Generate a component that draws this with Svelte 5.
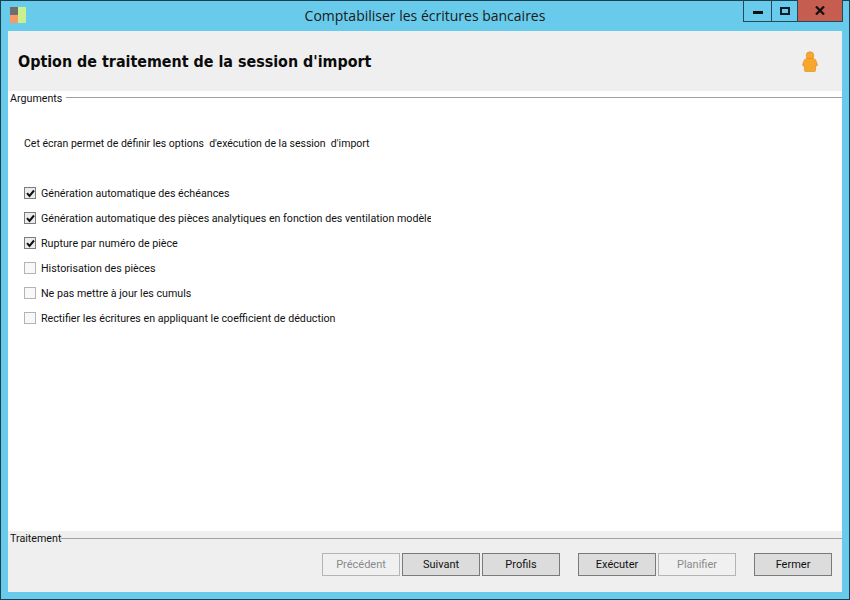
<script>
  const options = [
    { label: 'Génération automatique des échéances', checked: true },
    { label: 'Génération automatique des pièces analytiques en fonction des ventilation modèles', checked: true },
    { label: 'Rupture par numéro de pièce', checked: true },
    { label: 'Historisation des pièces', checked: false },
    { label: 'Ne pas mettre à jour les cumuls', checked: false },
    { label: 'Rectifier les écritures en appliquant le coefficient de déduction', checked: false }
  ];
</script>

<div class="window">
  <div class="titlebar">
    <svg class="appicon" width="16" height="16" viewBox="0 0 16 16">
      <rect x="0" y="0" width="8" height="8" fill="#6e6e6e" />
      <rect x="0" y="8" width="8" height="8" fill="#f79a68" />
      <rect x="8" y="0" width="8" height="16" fill="#c8f08c" />
    </svg>
    <div class="title">Comptabiliser les écritures bancaires</div>
    <div class="controls">
      <div class="ctl min"><span></span></div>
      <div class="ctl max"><span></span></div>
      <div class="ctl close">
        <svg width="10" height="9" viewBox="0 0 10 9"><path d="M1 0.5 L9 8.5 M9 0.5 L1 8.5" stroke="#111" stroke-width="2.2" fill="none" /></svg>
      </div>
    </div>
  </div>
  <div class="client">
    <header class="head">
      <h1>Option de traitement de la session d'import</h1>
      <svg class="user" width="16" height="21" viewBox="0 0 16 21">
        <circle cx="8" cy="4.5" r="3.8" fill="#f8a62c" stroke="#d88c20" stroke-width="0.6" />
        <path d="M4.5 7.5 H11.5 Q14 8 14.5 11 L15.5 14 Q15 15.5 13.5 15 V19.5 Q13.5 20.5 12.5 20.5 H3.5 Q2.5 20.5 2.5 19.5 V15 Q1 15.5 0.5 14 L1.5 11 Q2 8 4.5 7.5 Z" fill="#f8a62c" stroke="#d88c20" stroke-width="0.6" />
      </svg>
    </header>
    <section class="main">
      <div class="legend args"><span>Arguments</span><i class="gap"></i></div>
      <p class="intro">Cet écran permet de définir les options&nbsp; d'exécution de la session&nbsp; d'import</p>
      <ul class="opts">
        {#each options as o}
          <li>
            <span class="box" class:on={o.checked}>
              {#if o.checked}
                <svg width="9" height="9" viewBox="0 0 9 9"><path d="M1 4.2 L3.5 7 L8 1.5" stroke="#111" stroke-width="2" fill="none" /></svg>
              {/if}
            </span>
            <span class="lbl">{o.label}</span>
          </li>
        {/each}
      </ul>
    </section>
    <footer class="foot">
      <div class="legend"><span>Traitement</span><i></i></div>
      <div class="buttons">
        <button class="btn off">Précédent</button>
        <button class="btn">Suivant</button>
        <button class="btn">Profils</button>
        <button class="btn sep">Exécuter</button>
        <button class="btn off">Planifier</button>
        <button class="btn sep">Fermer</button>
      </div>
    </footer>
  </div>
</div>

<style>
  :global(body) { margin: 0; }
  .window {
    box-sizing: border-box;
    width: 850px;
    height: 600px;
    background: #69cbec;
    border: 1px solid #1c3f50;
    padding: 0 7px 7px;
    display: flex;
    flex-direction: column;
    font-family: Roboto, "Liberation Sans", sans-serif;
    font-size: 10.7px;
    color: #111;
  }
  .titlebar {
    height: 30px;
    flex: none;
    display: flex;
    align-items: flex-start;
    position: relative;
  }
  .appicon { margin: 6px 0 0 2px; }
  .title {
    position: absolute;
    left: 0;
    right: 0;
    top: 6px;
    text-align: center;
    font-family: "Open Sans", sans-serif;
    font-size: 14px;
    line-height: 18px;
    color: #1a1a1a;
  }
  .controls {
    position: absolute;
    right: -1px;
    top: -1px;
    display: flex;
    height: 22px;
    border: 1px solid #26495a;
    border-top: none;
    width: 100px;
    box-sizing: border-box;
  }
  .ctl {
    display: flex;
    align-items: center;
    justify-content: center;
    box-sizing: border-box;
    border-right: 1px solid #26495a;
  }
  .min { width: 28px; }
  .max { width: 26px; }
  .close { flex: 1; background: #c75c50; border-right: none; }
  .min span { width: 10px; height: 3px; background: #111; margin-top: 4px; }
  .max span { width: 6px; height: 4px; border: 2px solid #0e1a2a; }
  .client {
    flex: 1;
    min-height: 0;
    display: flex;
    flex-direction: column;
    background: #fff;
  }
  .head {
    height: 60px;
    flex: none;
    background: #efefef;
    display: flex;
    align-items: center;
    justify-content: space-between;
    padding: 0 24px 0 10px;
  }
  h1 {
    margin: 0;
    font-family: "DejaVu Sans", sans-serif;
    font-stretch: condensed;
    font-size: 15.9px;
    font-weight: 700;
    color: #0b0b0b;
  }
  .main { flex: 1; min-height: 0; overflow: hidden; }
  .legend {
    display: flex;
    align-items: flex-start;
    height: 12px;
    line-height: 12px;
    padding-left: 2px;
  }
  .legend span { margin-top: 1px; }
  .legend.args span { margin-top: 2px; }
  .legend i {
    flex: 1;
    height: 1px;
    background: #a0a0a0;
    margin-top: 6px;
  }
  .legend i.gap { margin-left: 4px; }
  .intro { margin: 33px 0 0 16px; line-height: 15px; font-size: 10.5px; }
  .opts { list-style: none; margin: 30px 0 0 16px; padding: 0; width: 407px; overflow: hidden; }
  .opts li {
    display: flex;
    align-items: center;
    height: 25px;
    white-space: nowrap;
  }
  .box {
    box-sizing: border-box;
    flex: none;
    width: 12px;
    height: 12px;
    border: 1px solid #b4b4b4;
    background: #f8f8f8;
    margin-right: 5px;
    margin-top: -1px;
    display: flex;
    align-items: center;
    justify-content: center;
  }
  .box.on { border-color: #7c7c7c; background: #ececec; }
  .foot {
    height: 61px;
    flex: none;
    background: #efefef;
    padding-top: 1px;
    box-sizing: border-box;
  }
  .buttons {
    display: flex;
    justify-content: flex-end;
    gap: 2px;
    padding: 9px 10px 0 0;
  }
  .btn {
    box-sizing: border-box;
    width: 78px;
    height: 23px;
    padding: 0;
    font: inherit;
    font-size: 11px;
    color: #111;
    background: #dcdcdc;
    border: 1px solid #7a7a7a;
  }
  .off { background: #f0f0f0; border-color: #b4b4b4; color: #8a8a8a; }
  .sep { margin-left: 16px; }
</style>
